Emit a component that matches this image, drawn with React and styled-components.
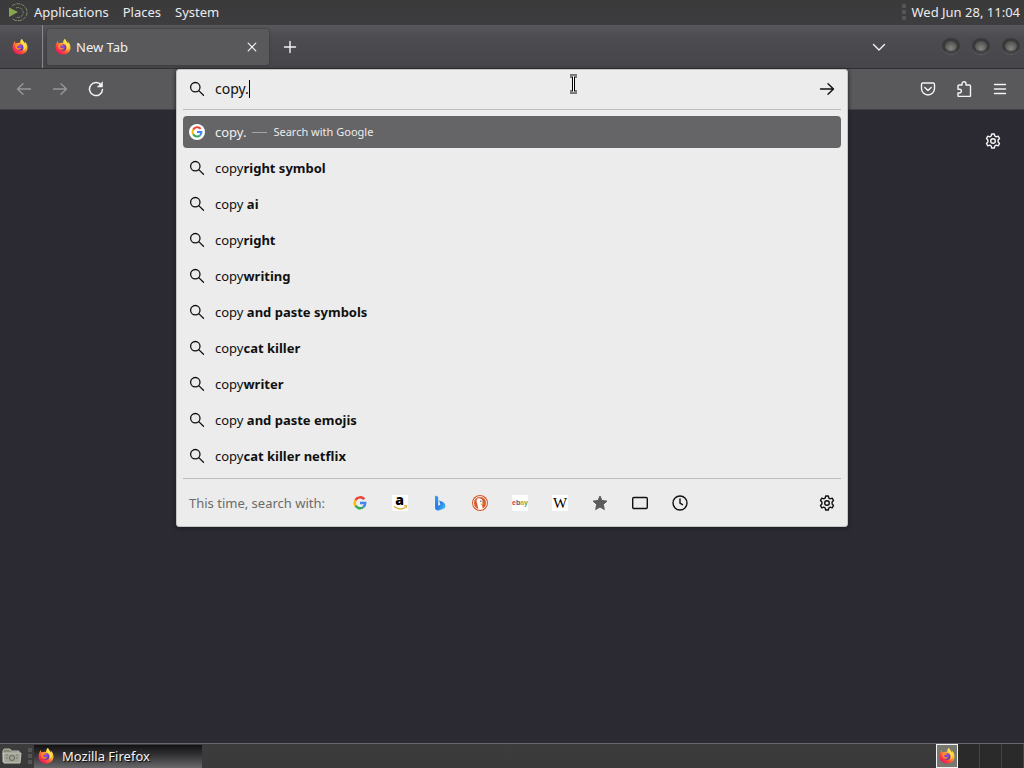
import React, { useId, useState } from 'react';
import styled, { createGlobalStyle } from 'styled-components';

const GlobalStyle = createGlobalStyle`
  *, *::before, *::after {
    box-sizing: border-box;
  }
  body {
    margin: 0;
    background: #2b2a33;
    font-family: "Noto Sans", sans-serif;
    font-size: 13px;
    line-height: 18px;
  }
  button, input {
    margin: 0;
    padding: 0;
    border: 0;
    background: none;
    color: inherit;
    font: inherit;
  }
  svg {
    display: block;
    flex: none;
  }
`;

const Desktop = styled.div`
  display: flex;
  flex-direction: column;
  min-height: 100vh;
  color: #f4f4f5;
`;

const TopPanel = styled.header`
  display: flex;
  align-items: center;
  justify-content: space-between;
  height: 25px;
  padding: 0 4px 2px 8px;
  background: linear-gradient(#3a3a3b, #3d3d3f);
`;

const PanelMenu = styled.nav`
  display: flex;
  align-items: center;
  gap: 14px;
`;

const PanelButton = styled.button`
  display: flex;
  align-items: center;
  gap: 6px;
  color: #ebebec;
`;

const Clock = styled.div`
  display: flex;
  align-items: center;
  gap: 6px;
  color: #ebebec;
`;

const Grip = styled.span`
  width: 4px;
  height: 16px;
  background: repeating-linear-gradient(#555556 0 4px, transparent 4px 6px);
`;

const TabBar = styled.div`
  display: flex;
  align-items: center;
  height: 44px;
  padding-right: 4px;
  border-bottom: 1px solid #303032;
  background: linear-gradient(#58575b, #4c4b50 30%, #464549);
`;

const PinnedButton = styled.button`
  display: flex;
  align-items: center;
  width: 43px;
  height: 43px;
  padding-left: 12px;
  border-right: 1px solid #88888b;
`;

const Tab = styled.div`
  display: flex;
  align-items: center;
  gap: 5px;
  width: 222px;
  height: 36px;
  margin-left: 4px;
  padding: 0 9px 0 8px;
  border-radius: 3px;
  background: #59595b;
  box-shadow: 0 0 3px #343436;
`;

const TabTitle = styled.span`
  flex: 1;
  color: #f0f0f1;
`;

const IconButton = styled.button`
  display: flex;
  align-items: center;
  justify-content: center;
  width: ${props => props.$width || 36}px;
  height: ${props => props.$height || 32}px;
  opacity: ${props => (props.$dim ? 0.4 : 1)};
`;

const Spacer = styled.div`
  flex: 1;
`;

const WindowButtons = styled.div`
  display: flex;
  gap: 12px;
  margin: 0 0 2px 45px;
`;

const WindowButton = styled.button`
  width: 18px;
  height: 16px;
  border: 3px solid #39393a;
  border-bottom-color: #444446;
  border-radius: 50%;
  background: radial-gradient(circle at 50% 75%, #858680, #4f504e 75%);
  box-shadow: 0 1px 1px #5c5c5e;
`;

const Toolbar = styled.div`
  display: flex;
  align-items: center;
  height: 41px;
  border-bottom: 1px solid #424145;
  background: #59595b;
`;

const ToolGroup = styled.div`
  display: flex;
  flex: 1;
  justify-content: ${props => (props.$end ? 'flex-end' : 'flex-start')};
  padding: 0 6px;
`;

const UrlSlot = styled.div`
  position: relative;
  flex: 0 1 672px;
  align-self: stretch;
`;

const Popup = styled.div`
  position: absolute;
  z-index: 2;
  top: 0;
  left: 0;
  right: 0;
  padding: 0 6px;
  border: 1px solid #c4c4c4;
  border-radius: 3px;
  background: #ececec;
  color: #101010;
  box-shadow: 0 1px 4px #1b1a20;
`;

const SearchField = styled.div`
  display: flex;
  align-items: center;
  height: 40px;
  padding: 0 6px 2px;
  border-bottom: 1px solid #bdbdbd;
`;

const FieldLabel = styled.label`
  display: flex;
  flex: 1;
  align-items: center;
`;

const UrlInput = styled.input`
  field-sizing: content;
  margin-left: 10px;
  font-size: 14px;
  caret-color: transparent;
  outline: none;
`;

const Caret = styled.span`
  width: 1px;
  height: 18px;
  background: #000;
`;

const Suggestions = styled.ul`
  display: flex;
  flex-direction: column;
  gap: 4px;
  margin: 0;
  padding: 6px 0;
  list-style: none;
`;

const Suggestion = styled.button`
  display: flex;
  align-items: center;
  gap: 10px;
  width: 100%;
  height: 32px;
  padding: 0 6px;
  border-radius: 4px;
  background: ${props => (props.$selected ? '#656567' : 'transparent')};
  color: ${props => (props.$selected ? '#f0f0f0' : '#101010')};
  text-align: left;
  white-space: pre;
`;

const Engine = styled.span`
  display: flex;
  align-items: center;
  gap: 6px;
  margin-left: -4px;
  color: #ececec;
  font-size: 11px;
`;

const Dash = styled.span`
  width: 15px;
  height: 1px;
  background: #a6a6a7;
`;

const OneOffs = styled.div`
  display: flex;
  align-items: center;
  height: 48px;
  padding-left: 6px;
  border-top: 1px solid #bdbdbd;
`;

const OneOffLabel = styled.span`
  margin-right: 15px;
  color: #6b6b6b;
`;

const Pointer = styled.svg`
  position: absolute;
  top: 4px;
  left: 392px;
`;

const Page = styled.main`
  display: flex;
  flex: 1;
  align-items: flex-start;
  justify-content: flex-end;
  padding: 15px 13px;
  background: #2b2a33;
`;

const Taskbar = styled.footer`
  display: flex;
  align-items: center;
  height: 25px;
  padding-left: 2px;
  border-top: 1px solid #68686a;
  background: linear-gradient(#3c3c3d, #39393a);
`;

const FilesButton = styled(IconButton)`
  margin-right: 6px;
`;

const TaskButton = styled.button`
  display: flex;
  align-items: center;
  gap: 8px;
  width: 168px;
  height: 23px;
  margin-left: 2px;
  padding: 0 4px;
  background: linear-gradient(#121214, #343436 45%, #68686a);
  text-shadow: 1px 1px 1px #000;
`;

const Workspaces = styled.div`
  display: flex;
  height: 24px;
`;

const Workspace = styled.button`
  display: flex;
  align-items: center;
  justify-content: center;
  width: 22px;
  border: ${props => (props.$active ? '1px solid #f2f2f2' : '0')};
  border-right: ${props => (props.$active ? '1px solid #f2f2f2' : '1px solid #454546')};
  background: ${props => (props.$active ? '#77786f' : '#2a2a2b')};
`;

function FirefoxIcon({ size = 16 }) {
  const id = useId();
  return (
    <svg width={size} height={size} viewBox="0 0 32 32">
      <defs>
        <linearGradient id={`${id}f`} x1="0.85" y1="0.1" x2="0.2" y2="0.9">
          <stop offset="0" stopColor="#fff44f" />
          <stop offset="0.35" stopColor="#ffb52e" />
          <stop offset="0.65" stopColor="#ff5838" />
          <stop offset="1" stopColor="#ef1658" />
        </linearGradient>
        <radialGradient id={`${id}g`} cx="0.5" cy="0.35">
          <stop offset="0" stopColor="#a352e8" />
          <stop offset="1" stopColor="#5a37b8" />
        </radialGradient>
      </defs>
      <path fill={`url(#${id}f)`} d="M20 0c-3 2-4 5-4 8-4-1-6 0-8 1-2-1-2-3-2-5C3 7 1 12 1 17c0 8 6 14 15 14s15-6 15-14c0-6-3-10-6-12 1 2 1 3 1 5-2-5-5-6-6-10z" />
      <circle cx="16" cy="17" r="6.500" fill={`url(#${id}g)`} />
      <path fill="#ff8a2d" d="M7 10c3-2 7 0 9 2-1 2-5 1-6 4 2 3 5 3 9 2-2 4-8 5-11 1-2-3-2-6-1-9z" />
      <path fill="#ffe14a" d="M20 0c-4 4-1 8 2 11 3 4 3 8 0 12 5-2 7-8 4-13-2-4-5-6-6-10z" />
    </svg>
  );
}

function DesktopLogo() {
  return (
    <svg width="20" height="20" viewBox="0 0 20 20" fill="none" stroke="#7d8b68">
      <path d="M1 5.500l9 4.500-9 5z" fill="#86a650" stroke="none" />
      <path d="M4 4a9 8.500 0 1 1 0 12.500" strokeDasharray="4 1" />
      <path d="M8 6a5 5 0 1 1 0 9" strokeDasharray="3 1" />
    </svg>
  );
}

function Line({ size = 16, width = 1.4, children }) {
  return (
    <svg width={size} height={size} viewBox="0 0 16 16" fill="none" stroke="currentColor" strokeWidth={width} strokeLinecap="round" strokeLinejoin="round">
      {children}
    </svg>
  );
}

const SearchIcon = () => <Line width={1.3}><circle cx="6.300" cy="6.200" r="4.700" /><path d="M9.700 9.600l4.800 4.700" /></Line>;
const BackIcon = () => <Line><path d="M14.500 8H1.500M7 2.800L1.500 8 7 13.200" /></Line>;
const ForwardIcon = () => <Line><path d="M1.500 8h13M9 2.800L14.500 8 9 13.200" /></Line>;
const CloseIcon = () => <Line width={1.2}><path d="M4.200 4.200l7.600 7.600M11.800 4.200l-7.600 7.600" /></Line>;
const PlusIcon = () => <Line><path d="M8 2.500v11M2.500 8h11" /></Line>;
const ChevronIcon = () => <Line><path d="M2.500 5.500L8 11l5.500-5.500" /></Line>;
const MenuIcon = () => <Line width={1.4}><path d="M2.500 3.500h11M2.500 8h11M2.500 12.500h11" /></Line>;

function ReloadIcon() {
  return (
    <Line width={1.5}>
      <path d="M13.300 4.300A6.500 6.500 0 1 0 14.500 8.500" />
      <path d="M14.500 1v5h-5z" fill="currentColor" strokeWidth="0.500" />
    </Line>
  );
}

function PocketIcon() {
  return (
    <Line>
      <path d="M3 2h10q1.500 0 1.500 1.500V7.500a6.500 6.500 0 0 1-13 0V3.500Q1.500 2 3 2z" />
      <path d="M4.800 6.500L8 9.600l3.200-3.100" />
    </Line>
  );
}

function ExtensionIcon() {
  return (
    <Line>
      <path d="M6 4V2.800a2 2 0 0 1 4 0V4h3.500q1 0 1 1v9.500q0 1-1 1H3q-1 0-1-1V12h1.500a1.900 1.900 0 0 0 0-3.800H2V5q0-1 1-1z" />
    </Line>
  );
}

function GearIcon() {
  return (
    <Line>
      <circle cx="8" cy="8" r="2.300" />
      <path d="M6.700 1h2.600l.5 2 1.400.8 2-.6 1.300 2.300-1.400 1.500v2l1.400 1.500-1.300 2.300-2-.6-1.400.8-.5 2H6.700l-.5-2-1.400-.8-2 .6-1.300-2.300L2.900 9V7L1.500 5.500l1.300-2.300 2 .6L6.200 3z" />
    </Line>
  );
}

function GoogleIcon({ badge }) {
  return (
    <svg width="16" height="16" viewBox="0 0 16 16" fill="none" strokeWidth="2.400">
      {badge && <circle cx="8" cy="8" r="8" fill="#fff" />}
      <g transform={badge ? 'translate(1.200 1.200) scale(.85)' : undefined}>
        <path d="M12.300 4.300A5.200 5.200 0 0 0 3.500 5.300" stroke="#ea4335" />
        <path d="M3.500 5.300a5.300 5.300 0 0 0 0 5.400" stroke="#fbbc05" />
        <path d="M3.500 10.700a5.200 5.200 0 0 0 7.800 1.400" stroke="#34a853" />
        <path d="M11.300 12.100A5 5 0 0 0 13.200 8H8" stroke="#4285f4" />
      </g>
    </svg>
  );
}

function AmazonIcon() {
  return (
    <svg width="16" height="16" viewBox="0 0 16 16" overflow="visible">
      <rect width="16" height="16" fill="#fff" />
      <text x="7.500" y="9.500" textAnchor="middle" fontFamily="Open Sans, sans-serif" fontWeight="800" fontSize="14">a</text>
      <path d="M2 11.500q6 4.500 11 1M12 11l2.500-.3-.6 2.500" fill="none" stroke="#d9a92c" strokeWidth="1.200" />
    </svg>
  );
}

function BingIcon() {
  const id = useId();
  return (
    <svg width="16" height="16" viewBox="0 0 16 16">
      <linearGradient id={id} x1="0" y1="0" x2="1" y2="1">
        <stop offset="0" stopColor="#35a5f6" />
        <stop offset="0.5" stopColor="#2878e6" />
        <stop offset="1" stopColor="#43d1f2" />
      </linearGradient>
      <path d="M3 0.500l3.200 1.300v9.200L8.500 9.500 7 5.500l4 1.500q2.500 1.300 2.500 4 0 1.500-1.300 2.500L7.500 15.300q-4.500 1.200-4.500-3.300z" fill={`url(#${id})`} />
    </svg>
  );
}

function DuckIcon() {
  return (
    <svg width="16" height="16" viewBox="0 0 16 16">
      <circle cx="8" cy="8" r="8" fill="#d65c31" />
      <circle cx="8" cy="8" r="6.500" fill="#d65c31" stroke="#fff" strokeWidth="0.900" />
      <path d="M5 4q1.500-1.500 4-.3 2 1.300 1.500 3.800L10 10l.8 3.800q-2 .8-4.300.2L5 8q-1-2.500 0-4z" fill="#fff" />
      <circle cx="8.800" cy="6.300" r="0.700" fill="#37526e" />
      <path d="M8.500 8.500h4l-3.500 1.800z" fill="#f7bd38" />
    </svg>
  );
}

function EbayIcon() {
  return (
    <svg width="16" height="16" viewBox="0 0 16 16" fontFamily="Liberation Sans, sans-serif" fontSize="7" fontWeight="bold">
      <rect width="16" height="16" fill="#fff" />
      <text x="8" y="10" textAnchor="middle">
        <tspan fill="#d43b45">e</tspan><tspan fill="#35649b">b</tspan><tspan fill="#d6a331">a</tspan><tspan fill="#72a43c">y</tspan>
      </text>
    </svg>
  );
}

function WikipediaIcon() {
  return (
    <svg width="16" height="16" viewBox="0 0 16 16">
      <rect width="16" height="16" fill="#fff" />
      <text x="8" y="13" textAnchor="middle" fontFamily="Liberation Serif, serif" fontSize="15">W</text>
    </svg>
  );
}

function StarIcon() {
  return (
    <svg width="16" height="16" viewBox="0 0 16 16" fill="#5b5b5b" stroke="#5b5b5b" strokeLinejoin="round">
      <path d="M8 1l2 4.500 5 .6-3.700 3.300 1 5.100L8 12l-4.300 2.500 1-5.100L1 6.100l5-.6z" />
    </svg>
  );
}

const TabsIcon = () => <Line><rect x="0.700" y="2.500" width="14.600" height="11" rx="1.200" /></Line>;
const HistoryIcon = () => <Line><circle cx="8" cy="8" r="7" /><path d="M8 4v4.200l2.500 1.500" /></Line>;

function FolderIcon() {
  return (
    <svg width="20" height="20" viewBox="0 0 20 20">
      <path d="M2 3h6l1 2h8v11H1V5z" fill="#85887b" stroke="#b8baac" />
      <path d="M1 7h18l-1 10H2z" fill="#a2a497" stroke="#c5c7ba" />
      <path d="M4 9h2M4 12h2M14 9h2M14 12h2" stroke="#777b6d" />
      <circle cx="10" cy="12" r="2.500" fill="none" stroke="#626659" />
    </svg>
  );
}

const suggestions = [
  ['copy', 'right symbol'],
  ['copy ', 'ai'],
  ['copy', 'right'],
  ['copy', 'writing'],
  ['copy ', 'and paste symbols'],
  ['copy', 'cat killer'],
  ['copy', 'writer'],
  ['copy ', 'and paste emojis'],
  ['copy', 'cat killer netflix']
];

const engines = [
  ['Google', GoogleIcon],
  ['Amazon', AmazonIcon],
  ['Bing', BingIcon],
  ['DuckDuckGo', DuckIcon],
  ['eBay', EbayIcon],
  ['Wikipedia', WikipediaIcon],
  ['Bookmarks', StarIcon],
  ['Tabs', TabsIcon],
  ['History', HistoryIcon]
];

function UrlBar() {
  const [query, setQuery] = useState('copy.');

  return (
    <Popup>
      <SearchField>
        <FieldLabel htmlFor="urlbar">
          <SearchIcon />
          <UrlInput id="urlbar" aria-label="Search" value={query} onChange={event => setQuery(event.target.value)} />
          <Caret />
        </FieldLabel>
        <IconButton $width={16} aria-label="Go"><ForwardIcon /></IconButton>
      </SearchField>
      <Suggestions>
        <li>
          <Suggestion $selected>
            <GoogleIcon badge />
            <span>{query}</span>
            <Engine><Dash />Search with Google</Engine>
          </Suggestion>
        </li>
        {suggestions.map(([typed, rest]) => (
          <li key={typed + rest}>
            <Suggestion>
              <SearchIcon />
              <span>{typed}<b>{rest}</b></span>
            </Suggestion>
          </li>
        ))}
      </Suggestions>
      <OneOffs>
        <OneOffLabel>This time, search with:</OneOffLabel>
        {engines.map(([name, Icon]) => (
          <IconButton key={name} $width={40} aria-label={name}><Icon /></IconButton>
        ))}
        <Spacer />
        <IconButton $width={28} aria-label="Search settings"><GearIcon /></IconButton>
      </OneOffs>
      <Pointer width="9" height="20" viewBox="0 0 9 20" fill="none">
        <path d="M1 2h7M4.500 2v16M1 18h7" stroke="#000" strokeWidth="3" />
        <path d="M1 2h7M4.500 2v16M1 18h7" stroke="#fff" strokeWidth="1" />
      </Pointer>
    </Popup>
  );
}

export default function App() {
  return (
    <Desktop>
      <GlobalStyle />
      <TopPanel>
        <PanelMenu>
          <PanelButton><DesktopLogo />Applications</PanelButton>
          <PanelButton>Places</PanelButton>
          <PanelButton>System</PanelButton>
        </PanelMenu>
        <Clock><Grip />Wed Jun 28, 11:04</Clock>
      </TopPanel>
      <TabBar>
        <PinnedButton aria-label="Firefox View"><FirefoxIcon /></PinnedButton>
        <Tab>
          <FirefoxIcon />
          <TabTitle>New Tab</TabTitle>
          <IconButton $width={16} aria-label="Close tab"><CloseIcon /></IconButton>
        </Tab>
        <IconButton $width={42} aria-label="New tab"><PlusIcon /></IconButton>
        <Spacer />
        <IconButton aria-label="List all tabs"><ChevronIcon /></IconButton>
        <WindowButtons>
          <WindowButton aria-label="Minimize" />
          <WindowButton aria-label="Maximize" />
          <WindowButton aria-label="Close" />
        </WindowButtons>
      </TabBar>
      <Toolbar>
        <ToolGroup>
          <IconButton $dim aria-label="Back"><BackIcon /></IconButton>
          <IconButton $dim aria-label="Forward"><ForwardIcon /></IconButton>
          <IconButton aria-label="Reload"><ReloadIcon /></IconButton>
        </ToolGroup>
        <UrlSlot><UrlBar /></UrlSlot>
        <ToolGroup $end>
          <IconButton aria-label="Save to Pocket"><PocketIcon /></IconButton>
          <IconButton aria-label="Extensions"><ExtensionIcon /></IconButton>
          <IconButton aria-label="Application menu"><MenuIcon /></IconButton>
        </ToolGroup>
      </Toolbar>
      <Page>
        <IconButton aria-label="Personalize new tab"><GearIcon /></IconButton>
      </Page>
      <Taskbar>
        <FilesButton $width={20} $height={24} aria-label="Show files"><FolderIcon /></FilesButton>
        <Grip />
        <TaskButton><FirefoxIcon />Mozilla Firefox</TaskButton>
        <Spacer />
        <Workspaces>
          <Workspace $active aria-label="Workspace 1"><FirefoxIcon /></Workspace>
          <Workspace aria-label="Workspace 2" />
          <Workspace aria-label="Workspace 3" />
          <Workspace aria-label="Workspace 4" />
        </Workspaces>
      </Taskbar>
    </Desktop>
  );
}
